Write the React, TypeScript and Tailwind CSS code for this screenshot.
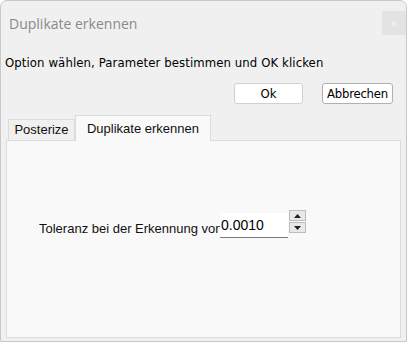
import React from 'react'

const App: React.FC = () => {
  return (
    <div className="w-[407px] h-[342px] bg-white">
      <div className="w-[407px] h-[342px] bg-[#f0f0f0] border border-[#c8c8c8] rounded-t-[7px] flex flex-col overflow-hidden">
        {/* title bar */}
        <div className="h-[46px] shrink-0 flex items-start justify-between">
          <span className="pl-[8px] pt-[13px] text-[14px] leading-[20px] text-[#8a8a8a] font-['Open_Sans',sans-serif]">Duplikate erkennen</span>
          <div className="mt-[10px] w-[24px] h-[24px] bg-[#e3e3e3] flex items-center justify-center text-[10px] text-[#f4f4f4] font-['DejaVu_Sans',sans-serif]">×</div>
        </div>
        <div className="pl-[4px] h-[28px] shrink-0 pt-[8px] text-[13px] leading-[15px] tracking-[0.1px] text-black font-['DejaVu_Sans_Condensed','DejaVu_Sans',sans-serif] [font-stretch:condensed]">
          Option wählen, Parameter bestimmen und OK klicken
        </div>
        {/* buttons */}
        <div className="flex justify-end gap-[19px] pr-[13px] pt-[8px] h-[40px] shrink-0">
          <button className="w-[69px] h-[21px] bg-white border border-[#d0d0d0] rounded-[3px] text-[13px] leading-[15px] font-['DejaVu_Sans_Condensed',sans-serif] [font-stretch:condensed]">Ok</button>
          <button className="w-[71px] h-[21px] bg-white border border-[#b0b0b0] rounded-[3px] text-[13px] leading-[15px] tracking-[-0.25px] font-['DejaVu_Sans_Condensed',sans-serif] [font-stretch:condensed]">Abbrechen</button>
        </div>
        {/* tabs */}
        <div className="px-[5px] flex items-end h-[25px] shrink-0 font-['Liberation_Sans',sans-serif] text-[13px]">
          <div className="ml-[2px] w-[67px] h-[21px] bg-[#f0f0f0] border border-b-0 border-[#dcdcdc] flex items-center justify-center text-[#111]">Posterize</div>
          <div className="w-[136px] h-[26px] bg-[#f9f9f9] border border-b-0 border-[#dcdcdc] flex items-center justify-center text-[#111] -mb-px relative z-10">Duplikate erkennen</div>
        </div>
        <div className="mx-[5px] h-[198px] shrink-0 bg-[#f9f9f9] border border-[#dcdcdc] flex items-start">
          <div className="mt-[72px] ml-[32px] flex items-start">
            <span className="w-[181px] overflow-hidden whitespace-nowrap text-[13px] pt-[6px] font-['Liberation_Sans',sans-serif] text-[#111]">Toleranz bei der Erkennung von</span>
            <div className="w-[68px] h-[25px] bg-white border-b border-[#7a7a7a] flex items-center pl-[1px] text-[14px] font-['Liberation_Sans',sans-serif]">0.0010</div>
            <div className="ml-[1px] -mt-[3px] flex flex-col gap-px">
              <div className="w-[17px] h-[11px] bg-[#e8e8e8] border border-[#bdbdbd] flex items-center justify-center">
                <svg width="7" height="4" viewBox="0 0 7 4"><path d="M0 4 L3.5 0 L7 4 Z" fill="#222" /></svg>
              </div>
              <div className="w-[17px] h-[11px] bg-[#e8e8e8] border border-[#bdbdbd] flex items-center justify-center">
                <svg width="7" height="4" viewBox="0 0 7 4"><path d="M0 0 L3.5 4 L7 0 Z" fill="#222" /></svg>
              </div>
            </div>
          </div>
        </div>
      </div>
    </div>
  )
}

export default App
